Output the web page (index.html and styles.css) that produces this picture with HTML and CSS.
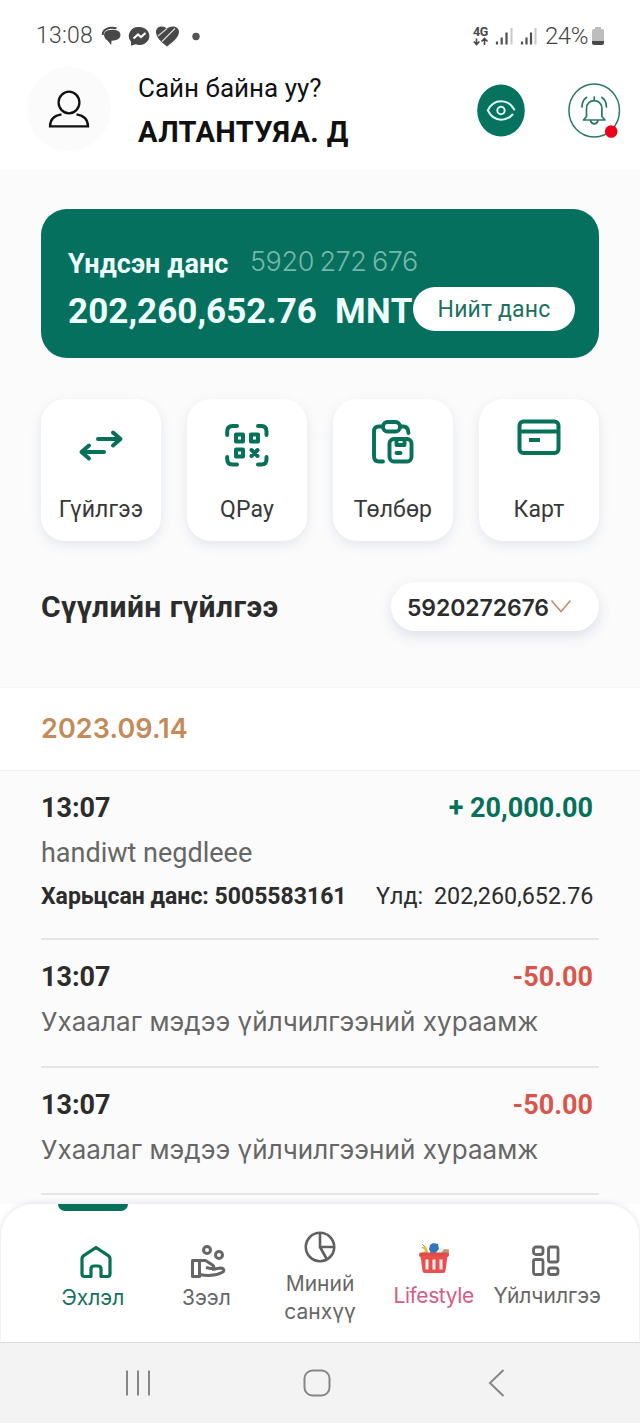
FILE: index.html
```html
<!DOCTYPE html>
<html lang="mn">
<head>
<meta charset="utf-8">
<title>Данс</title>
<link rel="stylesheet" href="styles.css">
</head>
<body>
<div class="status">
  <span class="clock">13:08</span>
  <svg class="notes" width="102" height="24" viewBox="0 0 102 24">
    <path d="M4 8C7 5 15 5 18 7.500c3 3 1.500 8.500-5 9l-2.500.2-.3 4.300-4-4.800C3.500 15 2 10.500 4 8z" fill="#484848"/>
    <path d="M1.800 11C1.500 5 8 2.800 15.500 4.200" stroke="#484848" stroke-width="2" fill="none"/>
    <path d="M38 3a9.800 9 0 1 1-3.500 17.200l-4.500 1.500v-4A9.300 9 0 0 1 38 3z" fill="#484848"/>
    <path d="M32.500 14.500l4.500-4 3 2.500 4.500-4" stroke="#fff" stroke-width="2.200" fill="none"/>
    <path d="M66 22.500C60 18 55 13 55 8 55 2 62 1 66 4.500 70 1 78 2 78 8 78 13 72 18 66 22.500z" fill="#484848"/>
    <path d="M57 12L66 4.500M61 17.500L74 4.500" stroke="#ddd" stroke-width="1.100"/>
    <circle cx="95" cy="12.500" r="3.700" fill="#555"/>
  </svg>
  <svg class="signal" width="68" height="24" viewBox="0 0 68 24">
    <text x="0" y="12" class="net">4G</text>
    <path d="M3.500 14.500v6M.8 17.500l2.800 3 2.800-3M11.500 21v-6M8.500 17.500l3-3 3 3" stroke="#484848" stroke-width="1.600" fill="none"/>
    <path d="M24 20.500v-3M28.700 20.500v-7M33.500 20.500V8.500M49 20.500v-3M53.500 20.500v-7M58 20.500V8.500" stroke="#505050" stroke-width="2.200"/>
    <path d="M38.500 20.500V4M62.500 20.500V4" stroke="#c9c9c9" stroke-width="2"/>
  </svg>
  <span class="percent">24%</span>
  <svg class="battery" width="14" height="20" viewBox="0 0 14 20">
    <path d="M4 1h6v2h1.500Q13 3 13 5v10H1V5q0-2 1.500-2H4z" fill="#bdbdbd"/>
    <path d="M1 15h12V17q0 2-2 2H3q-2 0-2-2z" fill="#484848"/>
  </svg>
</div>

<header class="header">
  <div class="avatar">
    <svg width="42" height="38" viewBox="0 0 42 38" fill="none" stroke="#111" stroke-width="2.300">
      <ellipse cx="21" cy="12.500" rx="10.400" ry="10.800"/>
      <path d="M13.500 24.300C6 25.500 2 30 2 36.400h38c0-6.400-4-10.900-11.500-12.100"/>
    </svg>
  </div>
  <div class="greeting">
    <div class="hello">Сайн байна уу?</div>
    <div class="name">АЛТАНТУЯА. Д</div>
  </div>
  <svg class="eye" width="48" height="53" viewBox="0 0 48 53" fill="none">
    <ellipse cx="24" cy="26.500" rx="23.800" ry="26" fill="#06735f"/>
    <path d="M35.500 30.500C32.500 34 29 35.700 24 35.700 18 35.700 13.500 32 10.800 26.300 13.500 20.500 18 17.200 24 17.200s10.500 3.300 13.200 8.300" stroke="#dff8f2" stroke-width="2" stroke-linecap="round"/>
    <circle cx="24" cy="26.500" r="3.700" stroke="#dff8f2" stroke-width="2"/>
  </svg>
  <svg class="bell" width="54" height="56" viewBox="0 0 54 56" fill="none" stroke="#2b7767">
    <ellipse cx="26.200" cy="27.500" rx="25.300" ry="26.600" stroke-width="1.500"/>
    <g stroke-width="1.700" stroke-linecap="round" stroke-linejoin="round">
      <path d="M26.200 14v3.500M18.500 33.500v-8c0-10.500 15.400-10.500 15.400 0v8l3 3.500H15.500zM22.500 37.500c1 4.500 6.500 4.500 7.500 0"/>
      <path d="M18.500 14.500c-3 2-4.500 5-4.500 9.500M33.900 14.500c3 2 4.500 5 4.500 9.500"/>
    </g>
    <circle cx="43.200" cy="48.500" r="6.300" fill="#ed0018" stroke="none"/>
  </svg>
</header>

<main class="main">
  <section class="card">
    <div class="card-line"><span class="card-title">Үндсэн данс</span><span class="card-no">5920 272 676</span></div>
    <div class="card-line"><span class="sum">202,260,652.76</span><span class="cur">MNT</span><button class="pill">Нийт данс</button></div>
  </section>

  <section class="tiles">
    <div class="tile">
      <svg width="46" height="46" viewBox="0 0 46 46" fill="none" stroke="#067158" stroke-width="4" stroke-linecap="round" stroke-linejoin="round">
        <path d="M20 17h22M35 10.500l7.500 6.500-7.500 6.500M26 30H4M11 23.500L3.500 30l7.500 6.500"/>
      </svg>
      <span>Гүйлгээ</span>
    </div>
    <div class="tile">
      <svg width="46" height="46" viewBox="0 0 46 46" fill="none" stroke="#067158" stroke-width="4" stroke-linecap="round" stroke-linejoin="round">
        <path d="M3.200 13V9.500Q3.200 4 8.500 4H13M34 4h3.500q5 0 5 5.500V13M42.500 35v2q0 5.500-5 5.500H34M13 42.500H8.500q-5.300 0-5.300-5.500V35"/>
        <path d="M12 12.500h7v7h-7zM27 12.500h7v7h-7zM12 27.500h7v7h-7zM27.500 28l6 6M33.500 28l-6 6"/>
      </svg>
      <span>QPay</span>
    </div>
    <div class="tile">
      <svg class="up3" width="46" height="46" viewBox="0 0 46 46" fill="none" stroke="#067158" stroke-width="3.900" stroke-linecap="round" stroke-linejoin="round">
        <rect x="13" y="3" width="17" height="9.500" rx="4.500"/>
        <path d="M12 7.500H8.500q-4.500 0-4.500 5V37q0 5.500 5 5.500h4M31 7.500h2.500q4.500 0 5 6.500"/>
        <rect x="19.500" y="20" width="22" height="22.500" rx="4.500"/>
        <path d="M26.500 21v5h8v-5M26.500 34h4"/>
      </svg>
      <span>Төлбөр</span>
    </div>
    <div class="tile">
      <svg class="up8" width="46" height="46" viewBox="0 0 46 46" fill="none" stroke="#067158" stroke-width="4" stroke-linejoin="round">
        <rect x="3.500" y="7.500" width="39" height="31.500" rx="4"/>
        <path d="M3.500 17.500h39M13 26h11"/>
      </svg>
      <span>Карт</span>
    </div>
  </section>

  <section class="recent">
    <h2 class="heading">Сүүлийн гүйлгээ</h2>
    <div class="select"><span class="select-no">5920272676</span>
      <svg width="22" height="16" viewBox="0 0 22 16" fill="none" stroke="#c08a6a" stroke-width="1.500"><path d="M1.500 1.500l9.500 11 9.500-11"/></svg>
    </div>
  </section>

  <div class="date"><span>2023.09.14</span></div>

  <section class="list">
    <article class="row">
      <div class="line top"><span class="time">13:07</span><span class="plus">+ 20,000.00</span></div>
      <div class="latin">handiwt negdleee</div>
      <div class="line detail"><span class="peer">Харьцсан данс: 5005583161</span><span class="left">Үлд:</span><span class="rest">202,260,652.76</span></div>
    </article>
    <article class="row small">
      <div class="line top"><span class="time">13:07</span><span class="minus">-50.00</span></div>
      <div class="desc">Ухаалаг мэдээ үйлчилгээний хураамж</div>
    </article>
    <article class="row small">
      <div class="line top"><span class="time">13:07</span><span class="minus">-50.00</span></div>
      <div class="desc">Ухаалаг мэдээ үйлчилгээний хураамж</div>
    </article>
  </section>
</main>

<nav class="nav">
  <div class="item home">
    <svg class="home-icon" width="34" height="34" viewBox="0 0 34 34" fill="none" stroke="#067158" stroke-width="3.200" stroke-linejoin="round">
      <path d="M3 13.500q0-1.500 1-2.300L17 2.500l13 8.700q1 .8 1 2.300V29q0 2.500-2.500 2.500H22V24q0-3-3-3h-4q-3 0-3 3v7.500H5.500Q3 31.500 3 29z"/>
    </svg>
    <span>Эхлэл</span>
  </div>
  <div class="item">
    <svg class="loan-icon" width="36" height="34" viewBox="0 0 36 34" fill="none" stroke="#666" stroke-width="3" stroke-linejoin="round">
      <circle cx="17" cy="5" r="3.500"/><circle cx="29" cy="10" r="3.500"/>
      <path d="M2.500 15.500h7v16h-7zM9.500 15.500h6l7 4.500c2.500 2 .5 4-2 3.500L16 22.500M22 24.500l8.500-1.500c3.500 0 4.500 3 1.500 4.500-6 3-14 4-22.500 2"/>
    </svg>
    <span>Зээл</span>
  </div>
  <div class="item finance">
    <svg width="34" height="34" viewBox="0 0 34 34" fill="none" stroke="#606060" stroke-width="2.600">
      <circle cx="17" cy="17" r="14.200"/><path d="M17 3v14h14M17 17l7 12.500"/>
    </svg>
    <span>Миний<br>санхүү</span>
  </div>
  <div class="item life">
    <svg width="34" height="34" viewBox="0 0 34 34">
      <path d="M4 6l5-.5 3 7H5l3-3z" fill="#e7bc4e"/><path d="M5 3l3 3" stroke="#90a96b"/>
      <path d="M21 13l6-5 5 .5V13z" fill="#b89d76"/>
      <path d="M13 4l3-2 5 1 1 5-4 5h-4l-2-5z" fill="#3678b7"/><path d="M18 13l6-7 3 2-4 6z" fill="#e7edf2"/>
      <rect x="2" y="11.500" width="30" height="4.500" rx="2" fill="#dd4e4b"/>
      <path d="M3.500 15h27l-2 15q-.3 2-2.500 2H8q-2.200 0-2.500-2z" fill="#e94f4f"/>
      <path d="M10 18.500v10M17 18.500v10M24 18.500v10" stroke="#fff2ef" stroke-width="3"/>
    </svg>
    <span>Lifestyle</span>
  </div>
  <div class="item services">
    <svg width="30" height="34" viewBox="0 0 30 34" fill="none" stroke="#666" stroke-width="2.800">
      <rect x="2.500" y="3" width="9.500" height="7.500" rx="2.500"/><rect x="2.500" y="15.500" width="9.500" height="15" rx="2"/>
      <rect x="17.500" y="3" width="9.500" height="15" rx="2"/><rect x="17.500" y="24" width="9.500" height="6.500" rx="2.500"/>
    </svg>
    <span>Үйлчилгээ</span>
  </div>
</nav>

<div class="system">
  <svg width="28" height="28" viewBox="0 0 28 28" stroke="#868686" stroke-width="2"><path d="M3 1.500v25M14 1.500v25M25 1.500v25"/></svg>
  <svg width="28" height="28" viewBox="0 0 28 28" fill="none" stroke="#868686" stroke-width="2"><rect x="1.500" y="1.500" width="25" height="25" rx="8"/></svg>
  <svg width="20" height="28" viewBox="0 0 20 28" fill="none" stroke="#868686" stroke-width="2"><path d="M16.500 1L3 14l13.500 13"/></svg>
</div>
</body>
</html>
```

FILE: styles.css
```css
* { box-sizing: border-box; }
body { margin: 0; width: 640px; height: 1423px; overflow: hidden; background: #fff; color: #2c2c2c; font-family: Roboto, sans-serif; display: flex; flex-direction: column; white-space: nowrap; }
svg { display: block; flex: none; }

.status { height: 50px; padding: 21px 34px 0 36px; display: flex; align-items: center; color: #444; }
.clock { font-size: 23px; font-weight: 300; width: 65px; letter-spacing: 0.200px; }
.signal { margin-left: 270px; }
.net { font: 700 12.500px Roboto, sans-serif; fill: #484848; letter-spacing: -0.300px; }
.percent { font-size: 24px; font-weight: 300; width: 46px; margin-left: 4px; letter-spacing: -0.500px; }
.battery { position: relative; left: 0; }

.header { height: 119px; padding: 16px 18px 0 27px; display: flex; align-items: flex-start; }
.avatar { width: 84px; height: 84px; margin-top: 1px; border-radius: 50%; background: #fbfbfb; display: flex; align-items: center; justify-content: center; }
.greeting { margin-left: 27px; width: 339px; line-height: 44px; color: #111; }
.hello { font-size: 26px; }
.name { font-size: 29px; font-weight: 700; letter-spacing: 0.400px; }
.eye { margin-top: 18px; }
.bell { margin: 17px 0 0 43px; }

.main { height: 1035px; background: #fbfbfb; padding-top: 40px; overflow: hidden; flex: none; }
.card { margin: 0 41px; height: 149px; padding: 30px 24px 0 27px; border-radius: 26px; background: #06705f; color: #effffb; }
.card-line { height: 48px; display: flex; align-items: center; }
.card-title { font-size: 27px; font-weight: 700; width: 182px; letter-spacing: 0.100px; padding-top: 1px; }
.card-no { font: 300 27px/40px Inter, sans-serif; color: #75b8aa; letter-spacing: -0.400px; word-spacing: -1.700px; margin-top: -3px; }
.sum { font-size: 35px; font-weight: 700; width: 267px; letter-spacing: 0.050px; }
.cur { font-size: 35px; font-weight: 700; width: 78px; letter-spacing: 0.400px; }
.pill { width: 162px; height: 44px; margin: -4px 0 0; padding: 0; border: 0; border-radius: 22px; background: #fff; color: #1c705f; font: 400 23px Roboto, sans-serif; letter-spacing: 0.150px; flex: none; }

.tiles { margin: 41px 41px 0; display: flex; justify-content: space-between; }
.tile { width: 120px; height: 142px; border-radius: 24px; background: #fff; box-shadow: 0 4px 12px rgba(70, 90, 150, .13); display: flex; flex-direction: column; align-items: center; padding-top: 23px; font-size: 23px; line-height: 30px; color: #383838; letter-spacing: 0.100px; }
.tile span { margin-top: 27px; }
.up3 { position: relative; top: -3px; }
.up8 { position: relative; top: -8px; }

.recent { margin: 41px 41px 0; height: 105px; display: flex; justify-content: space-between; align-items: flex-start; }
.heading { margin: 0; font-size: 30px; font-weight: 700; line-height: 49px; letter-spacing: 0.450px; }
.select { width: 208px; height: 49px; padding-left: 16px; border-radius: 25px; background: #fff; box-shadow: 0 5px 13px rgba(70, 90, 160, .17); display: flex; align-items: center; }
.select-no { font: 600 23px/49px Inter, sans-serif; width: 143px; padding-top: 4px; letter-spacing: -0.100px; }

.date { height: 84px; padding-left: 41px; background: #fff; border-top: 1px solid #f4f4f4; border-bottom: 1px solid #f2f2f2; color: #c48a59; font: 600 27px/82px Inter, sans-serif; letter-spacing: 0.100px; }

.list { padding: 0 41px; }
.row { height: 169px; padding-top: 15px; border-bottom: 2px solid #e5e5e5; }
.row.small { height: 127.500px; }
.line { display: flex; justify-content: space-between; padding-right: 6px; }
.top { font-size: 27px; font-weight: 700; line-height: 44px; }
.plus { color: #06705a; }
.minus { color: #d9564b; }
.latin { font-size: 27px; line-height: 46px; color: #666; }
.desc { font: 400 26px/45px Inter, sans-serif; color: #666; letter-spacing: 0.060px; }
.detail { font-size: 23.300px; line-height: 40px; }
.peer { font-size: 23px; font-weight: 700; width: 335px; padding-top: 1px; }
.left { width: 58px; }
.rest { width: 159px; }

.nav { height: 138px; flex: none; margin: 0 1px; padding: 0 35px; background: #fff; border-radius: 32px 32px 0 0; box-shadow: 0 0 6px rgba(40, 50, 110, .16); display: grid; grid-template-columns: repeat(5, 1fr); font-family: Inter, sans-serif; font-size: 21px; line-height: 28px; color: #666; position: relative; }
.item { display: flex; flex-direction: column; align-items: center; padding-top: 41px; text-align: center; }
.item span { margin-top: 5px; }
.home { color: #16705d; padding-top: 0; }
.home::before { content: ""; width: 70px; height: 7px; border-radius: 0 0 7px 7px; background: #067158; margin-bottom: 34px; }
.home-icon { margin-left: 7px; }
.loan-icon { margin-left: 4px; }
.finance { padding-top: 26px; }
.finance span { margin-top: 6px; }
.life { color: #d35c86; padding-top: 37px; }
.life span { margin-top: 7px; letter-spacing: -0.400px; }
.services { padding-top: 40px; }
.services svg { margin-left: -3px; }
.services span { margin-top: 4px; }

.system { position: relative; height: 81px; flex: none; background: #f3f3f3; border-top: 1px solid #dcdce2; display: flex; align-items: center; padding: 0 0 0 124px; }
.system svg:nth-child(2) { margin-left: 151px; }
.system svg:nth-child(3) { margin-left: 156px; }
```
